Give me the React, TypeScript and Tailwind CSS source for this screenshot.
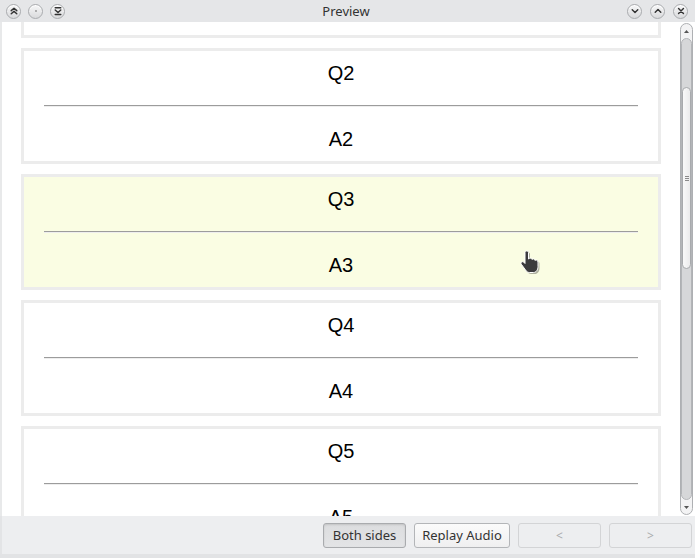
import React from "react";

const Circle = ({ children }: { children: React.ReactNode }) => (
  <div className="flex h-[15px] w-[15px] items-center justify-center rounded-full border border-[#a9abae] bg-gradient-to-b from-[#f7f7f8] to-[#d9dadc] shadow-[inset_0_1px_0_#ffffff]">
    <svg width="10" height="10" viewBox="0 0 9 9" fill="none" stroke="#333" strokeWidth="1.3" strokeLinecap="round" strokeLinejoin="round">
      {children}
    </svg>
  </div>
);

const Card = ({ q, a, hl }: { q: string; a: string; hl?: boolean }) => (
  <div className={`w-[640px] h-[116px] shrink-0 border-[3px] border-[#ececec] ${hl ? "bg-[#fafde3]" : "bg-white"} flex flex-col`}>
    <div className="pt-[11px] h-[34px] text-center text-[20px] leading-[23px] text-black" style={{ fontFamily: '"Liberation Sans", Arial, sans-serif' }}>
      {q}
    </div>
    <div className="mx-[20px] mt-[20px] h-[2px] border-t border-t-[#9c9c9c] border-b border-b-[#eeeeee]" />
    <div className="mt-[21px] h-[23px] text-center text-[20px] leading-[23px] text-black" style={{ fontFamily: '"Liberation Sans", Arial, sans-serif' }}>
      {a}
    </div>
  </div>
);

export default function App() {
  return (
    <div className="relative flex h-[558px] w-[695px] flex-col overflow-hidden bg-[#edeef0]" style={{ fontFamily: '"Noto Sans", "Open Sans", sans-serif' }}>
      {/* title bar */}
      <div className="relative flex h-[22px] items-center bg-[#e5e6e8] px-[6px]">
        <div className="flex gap-[7px]">
          <Circle>
            <path d="M2 4.2 L4.5 2 L7 4.2 M2 7 L4.5 4.8 L7 7" />
          </Circle>
          <Circle>
            <circle cx="4.5" cy="4.5" r="0.7" fill="#555" stroke="none" />
          </Circle>
          <Circle>
            <path d="M2 1.6 L7 1.6 M2 3.6 L4.5 5.8 L7 3.6 M2 7.6 L7 7.6" />
          </Circle>
        </div>
        <div className="flex-1 text-center text-[13px] text-[#333] leading-[22px]">Preview</div>
        <div className="flex gap-[8px] pr-[1px]">
          <Circle>
            <path d="M2 3.3 L4.5 5.8 L7 3.3" />
          </Circle>
          <Circle>
            <path d="M2 5.7 L4.5 3.2 L7 5.7" />
          </Circle>
          <Circle>
            <path d="M2.3 2.3 L6.7 6.7 M6.7 2.3 L2.3 6.7" />
          </Circle>
        </div>
      </div>

      {/* content */}
      <div className="flex h-[494px] bg-white">
        <div className="w-[2px] bg-[#e8e9ea]" />
        <div className="w-[678px] overflow-hidden pl-[19px]">
          <div className="-mt-[100px] flex flex-col gap-[10px]">
            <Card q="" a="" />
            <Card q="Q2" a="A2" />
            <Card q="Q3" a="A3" hl />
            <Card q="Q4" a="A4" />
            <Card q="Q5" a="A5" />
          </div>
        </div>
        {/* scrollbar */}
        <div className="my-[1px] flex w-[13px] flex-col overflow-hidden rounded-full border border-[#aeb0b3] bg-[#f3f3f4]">
          <div className="flex h-[14px] items-center justify-center">
            <svg width="5" height="3" viewBox="0 0 5 3"><path d="M0 3 L2.5 0 L5 3 Z" fill="#555" /></svg>
          </div>
          <div className="flex flex-1 flex-col overflow-hidden rounded-full border border-[#b3b5b8] bg-[#d6d7d9]">
            <div className="h-[48px]" />
            <div className="flex h-[182px] items-center justify-center rounded-full border border-[#a8aaad] bg-gradient-to-r from-[#f9f9f9] to-[#ebebec]">
              <div className="flex flex-col gap-[1px]">
                <div className="h-[1px] w-[4px] bg-[#8a8a8a]" />
                <div className="h-[1px] w-[4px] bg-[#8a8a8a]" />
                <div className="h-[1px] w-[4px] bg-[#8a8a8a]" />
              </div>
            </div>
          </div>
          <div className="flex h-[14px] items-center justify-center">
            <svg width="5" height="3" viewBox="0 0 5 3"><path d="M0 0 L2.5 3 L5 0 Z" fill="#555" /></svg>
          </div>
        </div>
        <div className="w-[2px]" />
      </div>

      {/* bottom bar */}
      <div className="flex h-[38px] items-center justify-end gap-[8px] border-l-[2px] border-[#e3e4e6] pr-[3px] pt-[1px]">
        <button className="flex h-[25px] w-[83px] items-center justify-center rounded-[3px] border border-[#a9abae] bg-gradient-to-b from-[#dcdddf] to-[#e3e4e6] text-[13px] text-[#333] shadow-[inset_0_1px_2px_rgba(0,0,0,0.12)]">
          Both sides
        </button>
        <button className="flex h-[25px] w-[96px] items-center justify-center rounded-[3px] border border-[#b3b5b8] bg-gradient-to-b from-[#fbfbfb] to-[#efeff0] text-[13px] text-[#333]">
          Replay Audio
        </button>
        <button className="flex h-[25px] w-[83px] items-center justify-center rounded-[3px] border border-[#d3d4d6] bg-[#edeef0] text-[12px] text-[#aaabad]">
          &lt;
        </button>
        <button className="flex h-[25px] w-[83px] items-center justify-center rounded-[3px] border border-[#d3d4d6] bg-[#edeef0] text-[12px] text-[#aaabad]">
          &gt;
        </button>
      </div>
      <div className="h-[4px] bg-[#e2e3e5]" />

      {/* cursor */}
      <div className="absolute left-[519px] top-[250px]">
        <svg width="26" height="26" viewBox="0 0 26 26">
          <g transform="translate(1.5 1.5)" opacity="0.3" fill="#000">
            <path d="M6 2.5 C6 0.5 9.5 0.5 9.5 2.5 L9.5 9 C10 7.8 12.8 7.8 13 9.5 C13.5 8.5 16 8.7 16 10.5 C16.5 9.7 19 9.9 19 12 L19 16.5 C19 20 17 22.5 14.5 22.5 L10.5 22.5 C8.5 22.5 7.5 21.5 6.5 20 L2.3 14.2 C1.2 12.6 3.3 10.8 4.8 12.2 L6 13.5 Z" />
          </g>
          <path d="M6 2.5 C6 0.5 9.5 0.5 9.5 2.5 L9.5 9 C10 7.8 12.8 7.8 13 9.5 C13.5 8.5 16 8.7 16 10.5 C16.5 9.7 19 9.9 19 12 L19 16.5 C19 20 17 22.5 14.5 22.5 L10.5 22.5 C8.5 22.5 7.5 21.5 6.5 20 L2.3 14.2 C1.2 12.6 3.3 10.8 4.8 12.2 L6 13.5 Z" fill="#3b3b3d" stroke="#ffffff" strokeWidth="1" strokeLinejoin="round" />
        </svg>
      </div>
    </div>
  );
}
